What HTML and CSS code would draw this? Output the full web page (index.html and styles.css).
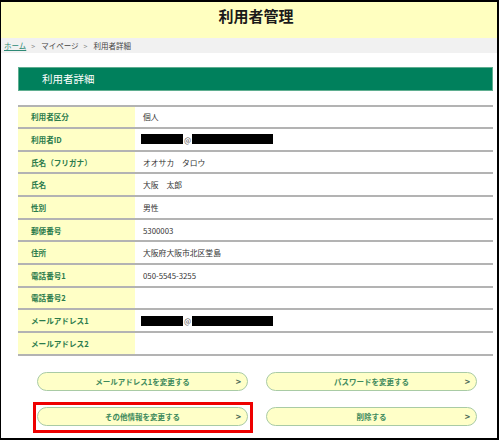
FILE: index.html
```html
<!DOCTYPE html>
<html lang="ja">
<head>
<meta charset="utf-8">
<title>利用者管理</title>
<link rel="stylesheet" href="styles.css">
</head>
<body>
<div class="frame">
  <header class="page-header">
    <h1 class="page-title">利用者管理</h1>
  </header>
  <nav class="breadcrumb">
    <a class="crumb-link" href="#">ホーム</a><span class="sep">&gt;</span><span class="crumb">マイページ</span><span class="sep">&gt;</span><span class="crumb">利用者詳細</span>
  </nav>
  <main class="content">
    <h2 class="section-title">利用者詳細</h2>
    <div class="detail">
      <div class="row"><div class="label">利用者区分</div><div class="value">個人</div></div>
      <div class="row"><div class="label">利用者ID</div><div class="value"><span class="mask mask-a"></span><span class="at">@</span><span class="mask mask-b"></span></div></div>
      <div class="row"><div class="label">氏名（フリガナ）</div><div class="value">オオサカ　タロウ</div></div>
      <div class="row"><div class="label">氏名</div><div class="value">大阪　太郎</div></div>
      <div class="row"><div class="label">性別</div><div class="value">男性</div></div>
      <div class="row"><div class="label">郵便番号</div><div class="value">5300003</div></div>
      <div class="row"><div class="label">住所</div><div class="value">大阪府大阪市北区堂島</div></div>
      <div class="row"><div class="label">電話番号1</div><div class="value">050-5545-3255</div></div>
      <div class="row"><div class="label">電話番号2</div><div class="value"></div></div>
      <div class="row"><div class="label">メールアドレス1</div><div class="value"><span class="mask mask-a"></span><span class="at">@</span><span class="mask mask-b"></span></div></div>
      <div class="row"><div class="label">メールアドレス2</div><div class="value"></div></div>
    </div>
    <div class="actions">
      <a class="btn" href="#"><span class="btn-text">メールアドレス1を変更する</span><span class="btn-arrow">&gt;</span></a>
      <a class="btn" href="#"><span class="btn-text">パスワードを変更する</span><span class="btn-arrow">&gt;</span></a>
      <a class="btn btn-marked" href="#"><span class="btn-text">その他情報を変更する</span><span class="btn-arrow">&gt;</span><span class="highlight"></span></a>
      <a class="btn" href="#"><span class="btn-text">削除する</span><span class="btn-arrow">&gt;</span></a>
    </div>
  </main>
</div>
</body>
</html>
```

FILE: styles.css
```css
* { box-sizing: border-box; }

html, body {
  margin: 0;
  padding: 0;
  background: #ffffff;
}

body {
  font-family: "Noto Sans CJK JP", "Noto Sans", sans-serif;
  color: #333333;
}

.frame {
  width: 499px;
  height: 440px;
  border-style: solid;
  border-color: #000000;
  border-width: 2px 2px 2px 1px;
  overflow: hidden;
}

.page-header {
  background: #ffffc0;
  height: 36px;
  padding-top: 4px;
}

.page-title {
  margin: 0;
  font-size: 15px;
  line-height: 20px;
  font-weight: bold;
  text-align: center;
  color: #1a1a1a;
  padding-left: 14px;
}

.breadcrumb {
  background: #f1f1f1;
  height: 15px;
  line-height: 15px;
  padding-left: 3px;
  font-size: 7.5px;
  color: #444444;
}

.crumb-link {
  color: #2f8a76;
  text-decoration: underline;
}

.sep {
  color: #8a8a8a;
  margin: 0 6px 0 5px;
  font-size: 7px;
}

.content {
  padding: 14px 4px 0 17px;
}

.section-title {
  margin: 0;
  height: 24px;
  line-height: 22px;
  background: #00805c;
  border: 1px solid #5fae90;
  color: #ffffff;
  font-size: 10.5px;
  font-weight: normal;
  padding-left: 23px;
}

.detail {
  margin-top: 13.5px;
  border-top: 2px solid #b3b3b3;
}

.row {
  display: grid;
  grid-template-columns: 117px 1fr;
  height: 22.65px;
  border-bottom: 2px solid #b3b3b3;
}

.label {
  background: #ffffc6;
  color: #2b7b4c;
  font-weight: bold;
  font-size: 7.6px;
  padding-left: 13px;
  display: flex;
  align-items: center;
}

.value {
  padding-left: 8px;
  font-size: 7.8px;
  color: #333333;
  display: flex;
  align-items: center;
}

.mask {
  display: inline-block;
  height: 10px;
  background: #000000;
}

.mask-a { width: 42px; margin-left: -2px; }
.mask-b { width: 81px; }

.at {
  font-size: 7.5px;
  color: #555555;
  width: 9px;
  padding-left: 1px;
}

.actions {
  display: grid;
  grid-template-columns: 211px 211px;
  column-gap: 18px;
  row-gap: 16px;
  margin-top: 16px;
  padding-left: 19px;
}

.btn {
  position: relative;
  display: flex;
  align-items: center;
  justify-content: center;
  height: 19px;
  border: 1px solid #a9cba5;
  border-radius: 10px;
  background: #ffffc8;
  text-decoration: none;
}

.btn-text {
  color: #3e8a5c;
  font-size: 7.5px;
  font-weight: bold;
}

.btn-arrow {
  position: absolute;
  right: 6px;
  top: 0;
  line-height: 17px;
  font-size: 9px;
  font-weight: bold;
  color: #4b6b58;
}

.highlight {
  position: absolute;
  left: -5px;
  top: -6px;
  width: 220px;
  height: 31px;
  border: 3px solid #ee0000;
  pointer-events: none;
}
```
